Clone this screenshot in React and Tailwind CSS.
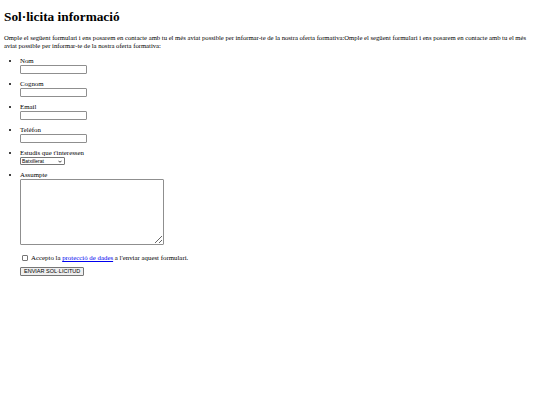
const fields = ['Nom', 'Cognom', 'Email', 'Telèfon'];

const intro =
  "Omple el següent formulari i ens posarem en contacte amb tu el més aviat possible per informar-te de la nostra oferta formativa:";

export default function App() {
  return (
    <div className="min-h-[405px] bg-white px-[4px] pt-[9px] text-black font-['Liberation_Serif',serif] text-[6.85px] leading-[8px]">
      <h1 className="text-[13.3px] leading-[15px] font-bold">Sol·licita informació</h1>
      <p className="mt-[10px] text-[6.7px] tracking-[-0.02px]">
        {intro}
        {intro}
      </p>
      <form className="mt-[7px]">
        <ul className="list-disc pl-[16px] flex flex-col gap-[6px]">
          {fields.map((f) => (
            <li key={f}>
              <label className="block">{f}</label>
              <input
                type="text"
                className="block w-[67px] h-[9px] border border-[#8f8f8f] rounded-[1px]"
              />
            </li>
          ))}
          <li>
            <label className="block">Estudis que t'interessen</label>
            <div className="relative w-[45px] h-[8px]">
              <select className="appearance-none block w-full h-full text-[5px] leading-[6px] border border-[#767676] rounded-[1px] font-['Liberation_Sans',sans-serif] pl-[1px] bg-white">
                <option>Batxillerat</option>
              </select>
              <svg
                viewBox="0 0 10 6"
                className="absolute right-[3px] top-[2.5px] w-[4px] h-[3px] pointer-events-none"
              >
                <path d="M1 1 L5 5 L9 1" fill="none" stroke="#000" strokeWidth="1.8" />
              </svg>
            </div>
          </li>
          <li>
            <label className="block">Assumpte</label>
            <textarea className="block w-[144px] h-[66px] border border-[#8f8f8f] rounded-[1px] resize" />
          </li>
        </ul>
        <div className="mt-[9px] pl-[18px] flex items-center gap-[3px]">
          <input
            type="checkbox"
            className="appearance-none w-[6px] h-[6px] m-0 border border-[#767676] rounded-[1px] bg-white"
          />
          <span>
            Accepto la{' '}
            <a href="#" className="text-[#0000ee] underline">
              protecció de dades
            </a>{' '}
            a l'enviar aquest formulari.
          </span>
        </div>
        <button
          type="button"
          className="mt-[5px] ml-[16px] h-[9px] px-[3px] text-[5.5px] leading-[7px] bg-[#efefef] border border-[#767676] rounded-[1px] font-['Liberation_Sans',sans-serif]"
        >
          ENVIAR SOL·LICITUD
        </button>
      </form>
    </div>
  );
}
